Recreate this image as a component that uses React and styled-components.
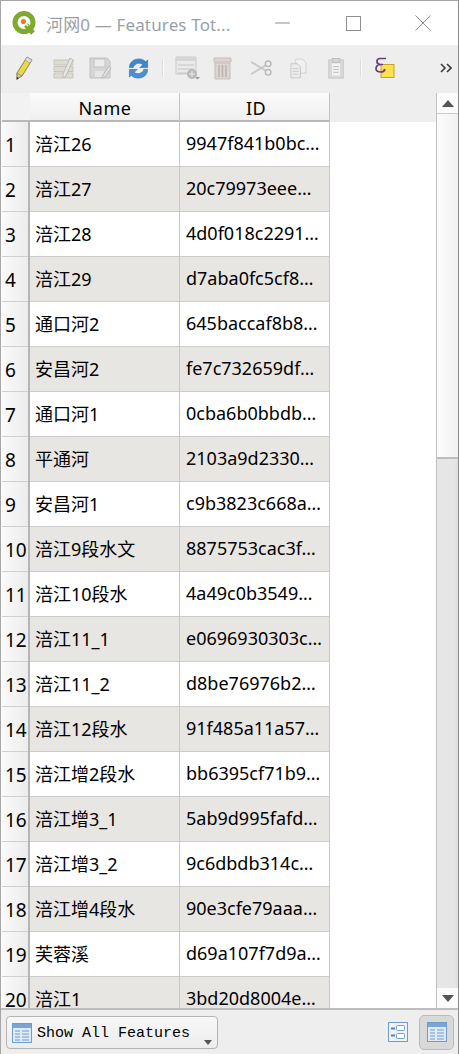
import React from 'react';
import styled, { createGlobalStyle } from 'styled-components';

const Global = createGlobalStyle`
  html, body { margin: 0; padding: 0; background: #fff; }
  #root { width: 459px; height: 1054px; }
`;
const Win = styled.div`
  width: 459px; height: 1054px; box-sizing: border-box; display: flex; flex-direction: column;
  border: 1px solid #a6a6a6; border-bottom: none; border-right-color: #8a8a8a; overflow: hidden;
  font-family: "Noto Sans", "Noto Sans CJK SC", sans-serif; background: #eee;
`;
const TitleBar = styled.div`
  height: 44px; flex: none; background: #fff; display: flex; align-items: center; padding-left: 11px;
`;
const Title = styled.div`
  margin-left: 9px; width: 186px; font-size: 17px; letter-spacing: .15px; color: #9a9fa6; white-space: nowrap; overflow: hidden;
`;
const WinBtns = styled.div`
  margin-left: auto; display: flex; height: 100%; align-items: center;
`;
const WinBtn = styled.div`
  width: 70px; display: flex; justify-content: center; align-items: center;
`;
const ToolBar = styled.div`
  height: 48px; flex: none; background: #eeeeee; display: flex; align-items: center; padding-left: 15px; box-sizing: border-box; padding-bottom: 2px;
`;
const Tool = styled.div`
  width: ${p => p.$w}px; height: 28px; flex: none; display: flex; align-items: center; justify-content: flex-start;
`;
const Sep = styled.div`
  width: 2px; height: 18px; background: #fafafa; border-left: 1px solid #dcdcdc; flex: none; margin-right: ${p => p.$r}px; box-sizing: border-box;
`;
const Chevrons = styled.svg`
  margin-left: auto; margin-right: 6px; flex: none;
`;
const Middle = styled.div`
  flex: 1; min-height: 0; display: flex; background: #fff; padding-left: 1px;
`;
const Table = styled.div`
  flex: 1; min-width: 0; overflow: hidden;
`;
const HeaderRow = styled.div`
  display: flex; height: 29px; background: #eee; box-sizing: border-box;
`;
const Corner = styled.div`
  width: 28px; flex: none; background: #f2f2f2; border-bottom: 2px solid #b8b8b8; box-sizing: border-box;
`;
const HeadCell = styled.div`
  width: ${p => p.$w}px; flex: none; box-sizing: border-box; display: flex; align-items: center; justify-content: center;
  font-size: 18px; letter-spacing: .5px; color: #000; padding: 2px 0 0 ${p => p.$pl}px;
  background: linear-gradient(#fbfbfb, #efefef); border-bottom: 2px solid #b8b8b8; border-right: 1px solid #c4c4c4;
`;
const Row = styled.div`
  display: flex; height: 45px; box-sizing: border-box;
`;
const RowHead = styled.div`
  width: 26px; flex: none; box-sizing: border-box; font-size: 19px; color: #000; display: flex; align-items: center; padding: 1px 0 0 3px;
  white-space: nowrap; background: linear-gradient(90deg, #fafafa, #ececec); border-bottom: 1px solid #cfcfcf;
`;
const HeadRule = styled.div`
  width: 2px; flex: none; background: #b5b5b5;
`;
const Cell = styled.div`
  width: ${p => p.$w}px; flex: none; box-sizing: border-box; padding: 0 0 2px ${p => p.$pl}px; display: flex; align-items: center;
  font-size: 18px; color: #000; white-space: nowrap; overflow: hidden;
  background: ${p => p.$alt ? '#e8e6e2' : '#fff'}; border-right: 1px solid #c8c8c8; border-bottom: 1px solid #cbcbcb;
`;
const Scroll = styled.div`
  width: 21px; flex: none; display: flex; flex-direction: column; border-left: 1px solid #c0c0c0; background: #e3e3e3;
`;
const ScrollBtn = styled.div`
  height: 20px; flex: none; background: #fbfbfb; display: flex; align-items: center; justify-content: center;
`;
const Thumb = styled.div`
  height: 346px; flex: none; background: linear-gradient(90deg, #fcfcfc, #f1f1f1); border-bottom: 2px solid #bdbdbd; border-top: 1px solid #ccc; box-sizing: border-box;
`;
const Track = styled.div`
  flex: 1; background: linear-gradient(90deg, #e6e6e6 85%, #dcdcdc);
`;
const Bottom = styled.div`
  height: 46px; flex: none; background: #eee; border-top: 2px solid #bdbdbd; box-sizing: border-box; display: flex; align-items: center; padding: 0 4px 0 5px;
`;
const Combo = styled.div`
  width: 212px; height: 33px; box-sizing: border-box; border: 1px solid #b4b4b4; border-radius: 4px; background: linear-gradient(#f8f8f8, #ececec);
  display: flex; align-items: center; padding-left: 5px; position: relative; margin-top: 1px;
`;
const ComboText = styled.span`
  font: 15px "Liberation Mono", monospace; color: #000; margin-left: 5px; padding-top: 2px;
`;
const Caret = styled.span`
  position: absolute; right: 5px; bottom: 3px; width: 0; height: 0; border: 4px solid transparent; border-top: 5px solid #555; border-bottom: 0;
`;
const ViewBtns = styled.div`
  margin-left: auto; display: flex; align-items: center; gap: 4px;
`;
const ViewBtn = styled.div`
  width: 35px; height: 35px; box-sizing: border-box; display: flex; align-items: center; justify-content: center; border-radius: 5px;
  ${p => p.$on ? 'background:#d9d9d9;border:1px solid #bbb;' : ''}
`;

const rows = [
  ['涪江26', '9947f841b0bc…'], ['涪江27', '20c79973eee…'], ['涪江28', '4d0f018c2291…'], ['涪江29', 'd7aba0fc5cf8…'],
  ['通口河2', '645baccaf8b8…'], ['安昌河2', 'fe7c732659df…'], ['通口河1', '0cba6b0bbdb…'], ['平通河', '2103a9d2330…'],
  ['安昌河1', 'c9b3823c668a…'], ['涪江9段水文', '8875753cac3f…'], ['涪江10段水', '4a49c0b3549…'], ['涪江11_1', 'e0696930303c…'],
  ['涪江11_2', 'd8be76976b2…'], ['涪江12段水', '91f485a11a57…'], ['涪江增2段水', 'bb6395cf71b9…'], ['涪江增3_1', '5ab9d995fafd…'],
  ['涪江增3_2', '9c6dbdb314c…'], ['涪江增4段水', '90e3cfe79aaa…'], ['芙蓉溪', 'd69a107f7d9a…'], ['涪江1', '3bd20d8004e…'],
];

const TableIcon = () => (
  <svg width="20" height="20" viewBox="0 0 20 20" fill="none">
    <rect x=".5" y=".5" width="19" height="19" fill="#dfeaf6" stroke="#6f9ccb" />
    <rect x="1" y="1" width="18" height="4" fill="#7aa5d2" />
    <path d="M3 8h5M10 8h7M3 11h5M10 11h7M3 14h5M10 14h7M3 17h5M10 17h7" stroke="#6f9ccb" />
  </svg>
);
const QLogo = () => (
  <svg width="25" height="24" viewBox="0 0 25 24" fill="none">
    <circle cx="12" cy="11.500" r="9" stroke="#7fa92f" strokeWidth="5" />
    <path d="M14 14l7 8" stroke="#7fa92f" strokeWidth="5" />
    <circle cx="11.500" cy="10.500" r="2.600" fill="#ee7913" />
    <path d="M13 12l3 3" stroke="#f1f1f1" strokeWidth="1.500" />
  </svg>
);
const Pencil = () => (
  <svg width="17" height="24" viewBox="0 0 17 24" fill="none">
    <path d="M11 1l5 3L6 20l-5 3 0-6z" fill="#e8d84a" stroke="#8a8450" />
    <path d="M6 20l-5 3 0-6z" fill="#d9c7a0" stroke="#777" strokeWidth=".7" />
    <path d="M.500 24l.5-3 2 1z" fill="#333" />
    <path d="M11 1l5 3-2 3-5-3z" fill="#ddd" stroke="#999" strokeWidth=".7" />
  </svg>
);
const EditRows = () => (
  <svg width="22" height="23" viewBox="0 0 22 23" fill="none">
    <path d="M1 3h19v5H1zM1 9.500h19v5H1zM1 16h19v5H1z" fill="#dddbd2" stroke="#c8c6bc" />
    <path d="M17 1l3 2-7 16-3 2 0-4z" fill="#e5e5e5" stroke="#bdbdbd" />
  </svg>
);
const Save = () => (
  <svg width="23" height="23" viewBox="0 0 23 23" fill="none">
    <path d="M1 1h17l3 3v17H1z" fill="#d5d5d5" stroke="#c2c2c2" />
    <rect x="5" y="2" width="11" height="8" fill="#ececec" stroke="#c2c2c2" />
    <rect x="6" y="14" width="9" height="6" fill="#e6e6e6" />
    <path d="M20 9l2 2-6 9-3 1 1-3z" fill="#e2e2e2" stroke="#bbb" />
  </svg>
);
const Reload = () => (
  <svg width="23" height="23" viewBox="0 0 23 24" fill="none">
    <path d="M2 11C2 5 7 2 12 2c3 0 5 1 7 3l2-2v8h-8l3-3c-2-2-6-2-8 0-1 1-2 2-2 3z" fill="#3f87c9" stroke="#2c6aa5" strokeWidth=".6" />
    <path d="M21 13c0 6-5 9-10 9-3 0-5-1-7-3l-2 2v-8h8l-3 3c2 2 6 2 8 0 1-1 2-2 2-3z" fill="#4a90d2" stroke="#2c6aa5" strokeWidth=".6" />
  </svg>
);
const AddRow = () => (
  <svg width="26" height="24" viewBox="0 0 26 24" fill="none">
    <path d="M1 1h20v17H1z" fill="#eaeaea" stroke="#c9c9c9" />
    <path d="M1 1h20v4H1z" fill="#d5d5d5" />
    <path d="M3 9h16M3 13h16M3 17h10" stroke="#c4c4c4" />
    <circle cx="17" cy="18" r="5" fill="#b9b9b9" />
    <path d="M17 15v6M14 18h6" stroke="#eee" />
    <path d="M20 21h5l-2.500 2.500z" fill="#999" />
  </svg>
);
const Trash = () => (
  <svg width="20" height="23" viewBox="0 0 20 23" fill="none">
    <path d="M1 1h17v4H1z" fill="#dcd5d3" stroke="#c7bdb9" />
    <path d="M2 6h15v16H2z" fill="#dcd5d3" stroke="#c7bdb9" />
    <path d="M6 8v12M9.500 8v12M13 8v12" stroke="#bdb2ae" strokeWidth="1.500" />
  </svg>
);
const Scissors = () => (
  <svg width="23" height="17" viewBox="0 0 24 18" fill="none">
    <path d="M1 2l15 9M1 15l15-9" stroke="#c9c9c9" strokeWidth="2" />
    <circle cx="19" cy="4" r="3" stroke="#b9b9b9" strokeWidth="1.500" />
    <circle cx="19" cy="13" r="3" stroke="#b9b9b9" strokeWidth="1.500" />
  </svg>
);
const Copy = () => (
  <svg width="17" height="21" viewBox="0 0 18 22" fill="none">
    <path d="M6 1h7l4 4v11H6z" fill="#f0f0f0" stroke="#cfcfcf" />
    <path d="M1 6h7l3 3v12H1z" fill="#ececec" stroke="#c4c4c4" />
    <path d="M3 11h6M3 14h6M3 17h6" stroke="#c8c8c8" />
  </svg>
);
const Paste = () => (
  <svg width="17" height="21" viewBox="0 0 17 22" fill="none">
    <rect x=".5" y="2" width="15" height="19" fill="#dedede" stroke="#c2c2c2" />
    <rect x="3" y="5" width="10" height="14" fill="#f2f2f2" stroke="#cfcfcf" />
    <rect x="4" y=".5" width="8" height="4" fill="#d5d5d5" stroke="#bdbdbd" />
    <path d="M5 9h6M5 12h6M5 15h6" stroke="#c0c0c0" />
  </svg>
);
const Expr = () => (
  <svg width="20" height="22" viewBox="0 0 20 22" fill="none">
    <rect x="6" y="7.500" width="13" height="13" fill="#fbe04f" stroke="#c9a320" />
    <path d="M11 1.500H5C2.500 1.500 2 3 2 4.500c0 2 1.500 3 3.500 3H8M8 7.500H5.500C2.500 7.800 1 9.500 1 11.500 1 14 3.500 15 6 15c2 0 3.500-1 3.800-3" stroke="#6b3a78" strokeWidth="1.700" />
  </svg>
);
const FormView = () => (
  <svg width="20" height="20" viewBox="0 0 20 20" fill="none">
    <rect x=".5" y=".5" width="19" height="19" fill="#eef3f9" stroke="#6f9ccb" />
    <rect x="3" y="5.500" width="4" height="2" fill="#5a7fa8" />
    <rect x="3" y="12.500" width="4" height="2" fill="#5a7fa8" />
    <rect x="8.500" y="3.500" width="8" height="5" rx="1" fill="#fff" stroke="#6f9ccb" />
    <rect x="8.500" y="11.500" width="8" height="5" rx="1" fill="#fff" stroke="#6f9ccb" />
  </svg>
);

export default function App() {
  return (
    <Win>
      <Global />
      <TitleBar>
        <QLogo />
        <Title>河网0 — Features Tot...</Title>
        <WinBtns>
          <WinBtn>
            <svg width="16" height="2" viewBox="0 0 16 2"><path d="M0 1h15" stroke="#8f8f8f" /></svg>
          </WinBtn>
          <WinBtn>
            <svg width="15" height="15" viewBox="0 0 15 15" fill="none"><rect x=".5" y=".5" width="14" height="14" stroke="#8f8f8f" /></svg>
          </WinBtn>
          <WinBtn>
            <svg width="16" height="16" viewBox="0 0 16 16" fill="none"><path d="M.5.500l15 15M15.500.500l-15 15" stroke="#8f8f8f" /></svg>
          </WinBtn>
        </WinBtns>
      </TitleBar>
      <ToolBar>
        <Tool $w={37}><Pencil /></Tool>
        <Tool $w={36}><EditRows /></Tool>
        <Tool $w={38}><Save /></Tool>
        <Tool $w={35}><Reload /></Tool>
        <Sep $r={11} />
        <Tool $w={38}><AddRow /></Tool>
        <Tool $w={37}><Trash /></Tool>
        <Tool $w={40}><Scissors /></Tool>
        <Tool $w={38}><Copy /></Tool>
        <Tool $w={32}><Paste /></Tool>
        <Sep $r={13} />
        <Tool $w={24}><Expr /></Tool>
        <Chevrons width="12" height="10" viewBox="0 0 12 10" fill="none">
          <path d="M1 1l4 4-4 4M7 1l4 4-4 4" stroke="#3a3a3a" strokeWidth="1.600" />
        </Chevrons>
      </ToolBar>
      <Middle>
        <Table>
          <HeaderRow>
            <Corner />
            <HeadCell $w={150} $pl={1}>Name</HeadCell>
            <HeadCell $w={150} $pl={3}>ID</HeadCell>
          </HeaderRow>
          {rows.map((r, i) => (
            <Row key={i}>
              <RowHead>{i + 1}</RowHead>
              <HeadRule />
              <Cell $w={150} $pl={5} $alt={i % 2 === 1}>{r[0]}</Cell>
              <Cell $w={150} $pl={6} $alt={i % 2 === 1}>{r[1]}</Cell>
            </Row>
          ))}
        </Table>
        <Scroll>
          <ScrollBtn>
            <svg width="12" height="7" viewBox="0 0 12 7"><path d="M6 0l6 7H0z" fill="#555" /></svg>
          </ScrollBtn>
          <Thumb />
          <Track />
          <ScrollBtn>
            <svg width="12" height="7" viewBox="0 0 12 7"><path d="M6 7l6-7H0z" fill="#555" /></svg>
          </ScrollBtn>
        </Scroll>
      </Middle>
      <Bottom>
        <Combo>
          <TableIcon />
          <ComboText>Show All Features</ComboText>
          <Caret />
        </Combo>
        <ViewBtns>
          <ViewBtn><FormView /></ViewBtn>
          <ViewBtn $on><TableIcon /></ViewBtn>
        </ViewBtns>
      </Bottom>
    </Win>
  );
}
